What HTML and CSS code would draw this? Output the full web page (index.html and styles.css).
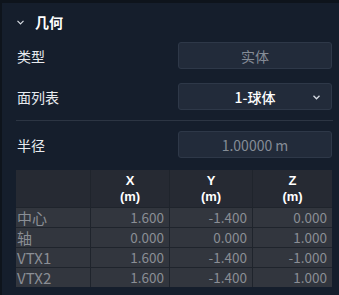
FILE: index.html
```html
<!DOCTYPE html>
<html lang="zh">
<head>
  <meta charset="UTF-8">
  <title>几何</title>
  <link rel="stylesheet" href="styles.css">
</head>
<body>

  <div class="panel">
    <div class="section-head">
      <svg class="caret" width="7" height="5" viewBox="0 0 7 5">
        <path d="M0.5 0.8 L3.5 3.8 L6.5 0.8" fill="none" stroke="#d6dbe2" stroke-width="1.2"/>
      </svg>
      <span>几何</span>
    </div>

    <div class="row first">
      <span class="label">类型</span>
      <div class="field muted">实体</div>
    </div>

    <div class="row second">
      <span class="label">面列表</span>
      <div class="field select">
        <span>1-球体</span>
        <svg class="select-arrow" width="7" height="5" viewBox="0 0 7 5">
          <path d="M0.5 0.8 L3.5 3.8 L6.5 0.8" fill="none" stroke="#d6dbe2" stroke-width="1.3"/>
        </svg>
      </div>
    </div>

    <div class="divider"></div>

    <div class="row third">
      <span class="label">半径</span>
      <div class="field muted">1.00000 m</div>
    </div>

    <div class="grid">
      <div class="th"></div>
      <div class="th"><span>X</span><span>(m)</span></div>
      <div class="th"><span>Y</span><span>(m)</span></div>
      <div class="th"><span>Z</span><span>(m)</span></div>

      <div class="td name">中心</div>
      <div class="td">1.600</div>
      <div class="td">-1.400</div>
      <div class="td">0.000</div>

      <div class="td name">轴</div>
      <div class="td">0.000</div>
      <div class="td">0.000</div>
      <div class="td">1.000</div>

      <div class="td name">VTX1</div>
      <div class="td">1.600</div>
      <div class="td">-1.400</div>
      <div class="td">-1.000</div>

      <div class="td name">VTX2</div>
      <div class="td">1.600</div>
      <div class="td">-1.400</div>
      <div class="td">1.000</div>
    </div>
  </div>

</body>
</html>
```

FILE: styles.css
```css
body {
  margin: 0;
  background: #0e141c;
  font-family: "Noto Sans CJK SC", "Noto Sans", sans-serif;
  color: #e8ebef;
}

.panel {
  margin: 3px 0 0 2px;
  height: 292px;
  padding: 0 7px 0 14px;
  background: #151e2c;
  display: flex;
  flex-direction: column;
}

.section-head {
  height: 38px;
  display: flex;
  align-items: center;
  gap: 11px;
  font-size: 14px;
  font-weight: bold;
  color: #ffffff;
}

.caret {
  margin-left: 1px;
  margin-top: 1px;
}

.row {
  display: flex;
  align-items: center;
  justify-content: space-between;
  height: 27px;
}

.first { margin-top: 1px; }
.second { margin-top: 14px; }
.third { margin-top: 10px; }

.label {
  font-size: 14px;
  padding-left: 1px;
}

.field {
  width: 154px;
  height: 27px;
  box-sizing: border-box;
  border: 1px solid #2e3848;
  border-radius: 3px;
  background: #222b3a;
  display: flex;
  align-items: center;
  justify-content: center;
  font-size: 14px;
}

.muted {
  color: #858c96;
}

.select {
  position: relative;
  font-weight: 500;
  color: #ffffff;
}

.select-arrow {
  position: absolute;
  right: 11px;
  top: 11px;
}

.divider {
  height: 1px;
  background: #2c3543;
  margin-top: 10px;
  margin-right: -1px;
}

.grid {
  margin-top: 12px;
  display: grid;
  grid-template-columns: 74px 78px 82px 79px;
  grid-template-rows: 37px repeat(4, 19px);
  gap: 1px;
  background: #1f242c;
  width: 316px;
}

.th {
  background: #262a33;
  color: #ffffff;
  font-family: "Liberation Sans", sans-serif;
  font-size: 13px;
  font-weight: bold;
  line-height: 16px;
  display: flex;
  flex-direction: column;
  align-items: center;
  justify-content: center;
}

.td {
  background: #32363e;
  color: #8a8e95;
  font-size: 13.5px;
  line-height: 19px;
  text-align: right;
  padding-right: 5px;
}

.td.name {
  text-align: left;
  padding-left: 1px;
  font-size: 15px;
}
```
